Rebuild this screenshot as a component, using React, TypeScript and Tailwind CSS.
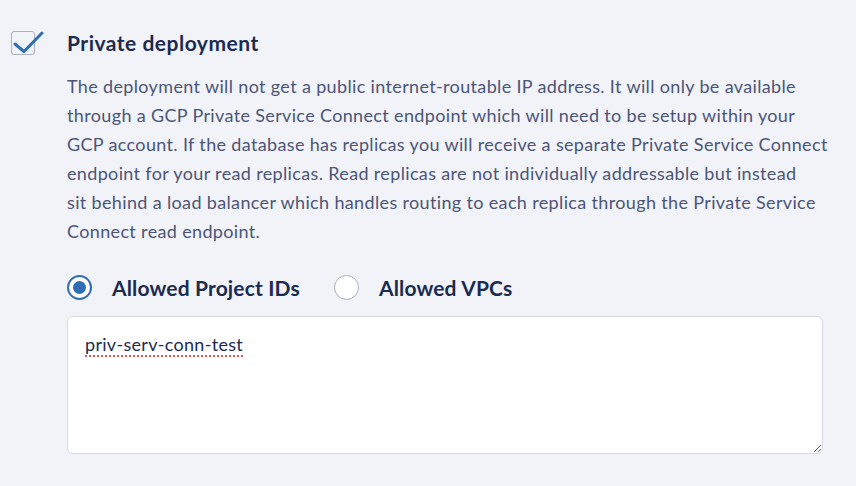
import { useState } from 'react';

const lines = [
  'The deployment will not get a public internet-routable IP address. It will only be available',
  'through a GCP Private Service Connect endpoint which will need to be setup within your',
  'GCP account. If the database has replicas you will receive a separate Private Service Connect',
  'endpoint for your read replicas. Read replicas are not individually addressable but instead',
  'sit behind a load balancer which handles routing to each replica through the Private Service',
  'Connect read endpoint.',
];

const Radio = ({ checked, label, onClick }: { checked: boolean; label: string; onClick: () => void }) => (
  <button type="button" onClick={onClick} className="flex items-center gap-[20px]">
    <span
      className={
        checked
          ? 'flex h-[25px] w-[25px] items-center justify-center rounded-full border-2 border-[#2f6db5] bg-white'
          : 'flex h-[25px] w-[25px] items-center justify-center rounded-full border border-[#a9afc4] bg-white'
      }
    >
      {checked && <span className="h-[13px] w-[13px] rounded-full bg-[#2f6db5]" />}
    </span>
    <span className="text-[21px] font-bold tracking-[0.15px] text-[#1a2b50]">{label}</span>
  </button>
);

const App = () => {
  const [mode, setMode] = useState<'project' | 'vpc'>('project');

  return (
    <div
      className="min-h-[486px] w-[856px] bg-[#f2f3f8] pl-[11px] pt-[28px]"
      style={{ fontFamily: 'Lato, "Noto Sans", sans-serif' }}
    >
      <div className="flex gap-[32px]">
        {/* Checkbox */}
        <div className="relative mt-[3px] h-[24px] w-[24px] shrink-0 rounded-[3px] border border-[#a9afc4]">
          <svg className="absolute left-[-1px] top-[-1px]" width="34" height="26" viewBox="0 0 34 26" fill="none">
            <path d="M4 13 L13 20.5 L31 2" stroke="#2f6db5" strokeWidth="3" strokeLinecap="round" strokeLinejoin="round" />
          </svg>
        </div>

        <div className="flex w-[756px] flex-col">
          <h2 className="text-[21px] font-bold leading-[30px] tracking-[0.5px] text-[#1a2b50]">Private deployment</h2>
          <p className="mt-[14px] text-[18px] leading-[29px] tracking-[0.35px] text-[#4b5577]">
            {lines.map((l) => (
              <span key={l} className="block whitespace-nowrap">
                {l}
              </span>
            ))}
          </p>

          <div className="mt-[26px] flex items-center gap-[34px]">
            <Radio checked={mode === 'project'} label="Allowed Project IDs" onClick={() => setMode('project')} />
            <Radio checked={mode === 'vpc'} label="Allowed VPCs" onClick={() => setMode('vpc')} />
          </div>

          <textarea
            defaultValue="priv-serv-conn-test"
            spellCheck={false}
            className="mt-[12px] h-[138px] w-[756px] rounded-[6px] border border-[#d6d9e3] bg-white px-[17px] py-[14px] text-[18px] tracking-[0.3px] text-[#1a2b50] underline decoration-[#e0524f] decoration-dotted decoration-2 underline-offset-[5px] outline-none"
          />
        </div>
      </div>
    </div>
  );
};

export default App;
